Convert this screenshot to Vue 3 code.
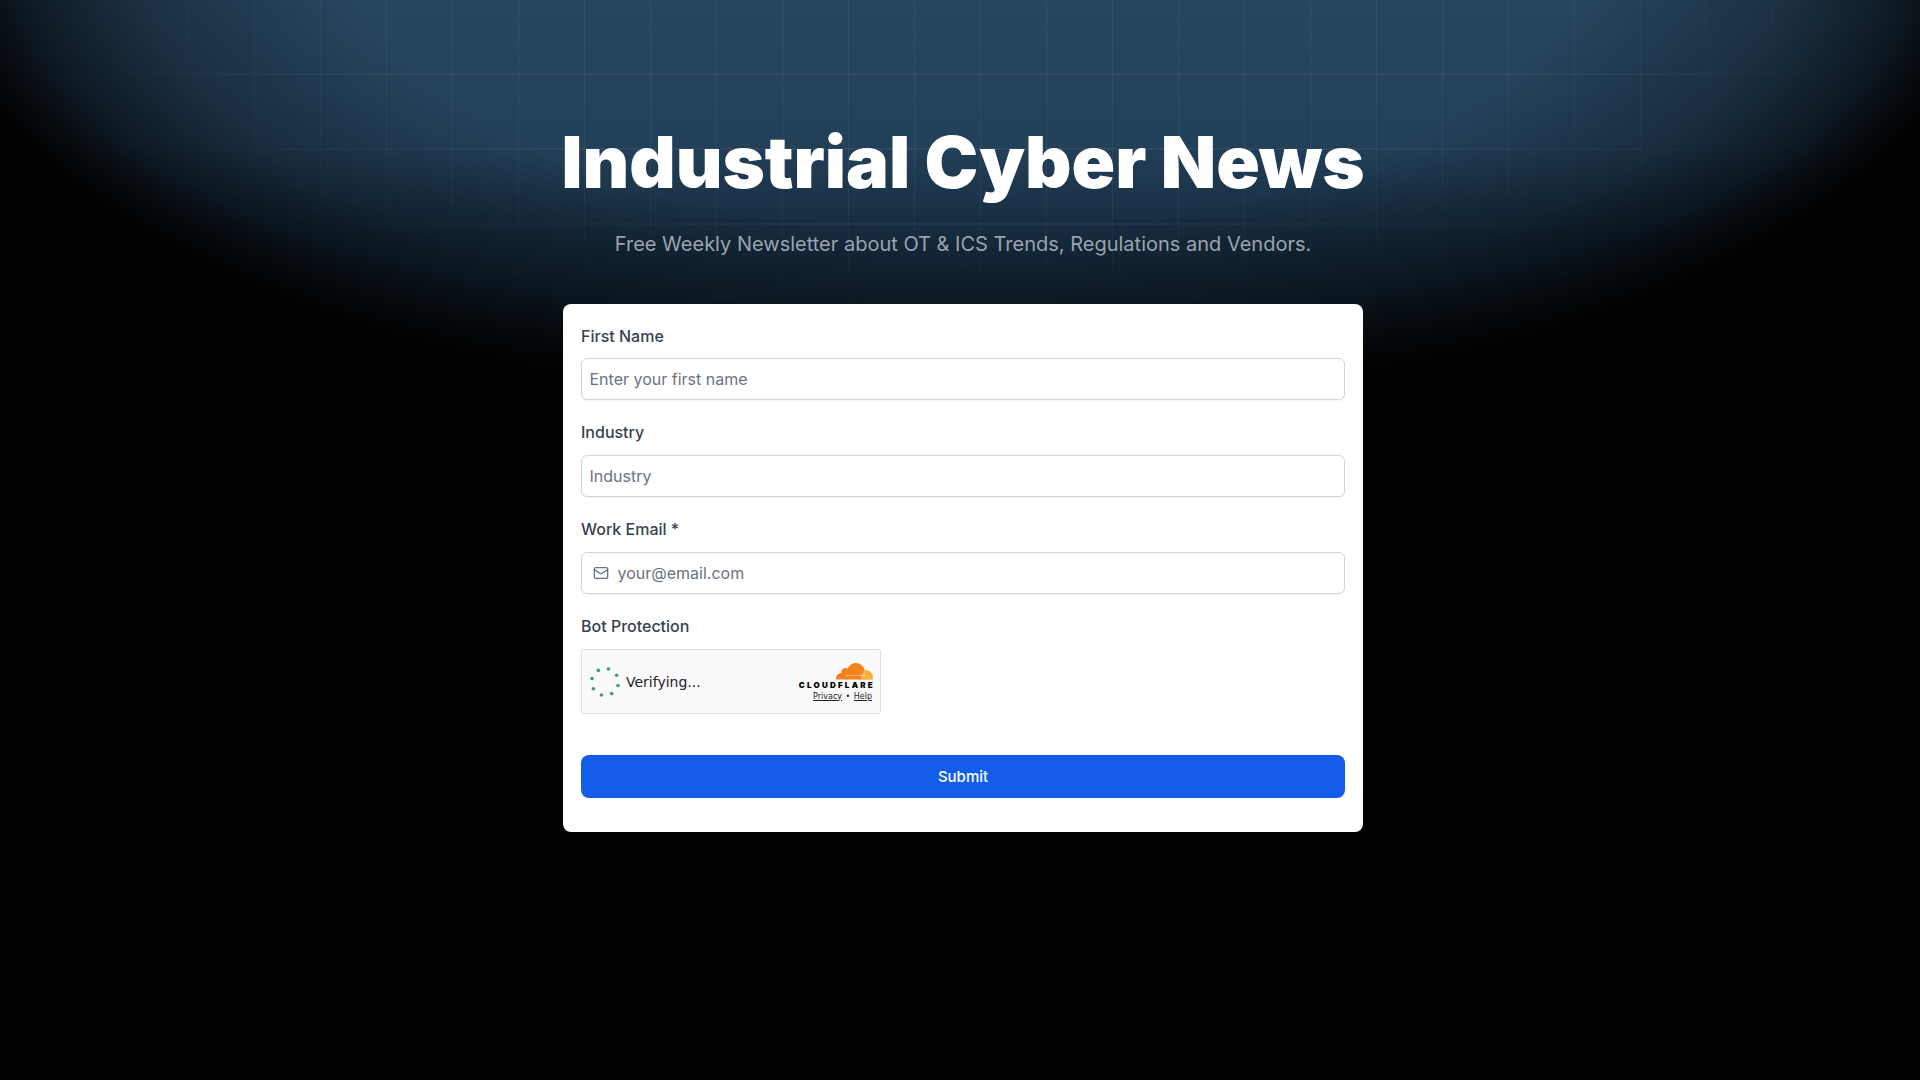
<script setup>
const dots = [0, 1, 2, 3, 4, 5, 6, 7].map((i) => {
  const a = (i * 45 + 15) * Math.PI / 180
  return { x: 15 + 13.4 * Math.cos(a), y: 15 + 13.4 * Math.sin(a) }
})
</script>

<template>
  <div class="page">
    <div class="glow"></div>
    <div class="grid"></div>
    <main class="content">
      <h1 class="title">Industrial Cyber News</h1>
      <p class="subtitle">Free Weekly Newsletter about OT &amp; ICS Trends, Regulations and Vendors.</p>
      <form class="card" @submit.prevent>
        <div class="field">
          <label>First Name</label>
          <input type="text" placeholder="Enter your first name" />
        </div>
        <div class="field">
          <label>Industry</label>
          <input type="text" placeholder="Industry" />
        </div>
        <div class="field">
          <label>Work Email *</label>
          <div class="input-wrap">
            <svg class="mail" viewBox="0 0 24 24" fill="none" stroke="currentColor" stroke-width="2" stroke-linecap="round" stroke-linejoin="round">
              <rect x="2" y="4" width="20" height="16" rx="2" />
              <path d="m22 7-8.97 5.7a1.94 1.94 0 0 1-2.06 0L2 7" />
            </svg>
            <input class="with-icon" type="email" placeholder="your@email.com" />
          </div>
        </div>
        <div class="field bot">
          <label>Bot Protection</label>
          <div class="turnstile">
            <svg class="spinner" viewBox="0 0 30 30">
              <circle v-for="(d, i) in dots" :key="i" :cx="d.x" :cy="d.y" r="1.8" fill="#3d9a7c" />
            </svg>
            <span class="verifying">Verifying...</span>
            <div class="cf">
              <svg class="cloud" viewBox="0 6 24 12">
                <path fill="#fbbf6a" d="M6 15.4 18.6 11l4 1.5 1.2 4.9H15.8z" />
                <path fill="#f6821f" d="M16.5088 16.8447c.1475-.5068.0908-.9707-.1553-1.3154-.2246-.3164-.6045-.499-1.0615-.5205l-8.6592-.1123a.1559.1559 0 0 1-.1333-.0713c-.0283-.042-.0351-.0986-.021-.1553.0278-.084.1123-.1484.2036-.1562l8.7359-.1123c1.0351-.0489 2.1601-.8868 2.5537-1.9136l.499-1.3013c.0215-.0561.0293-.1128.0147-.168-.5625-2.5463-2.835-4.4453-5.5499-4.4453-2.5039 0-4.6284 1.6177-5.3876 3.8614-.4927-.3658-1.1187-.5625-1.794-.499-1.2026.119-2.1665 1.083-2.2861 2.2856-.0283.31-.0069.6128.0635.894C1.5683 13.171 0 14.7754 0 16.752c0 .1748.0142.3515.0352.5273.0141.083.0844.1475.1689.1475h15.9814c.0909 0 .1758-.0645.2032-.1553l.12-.4268z" />
                <path fill="#fbad41" d="M19.2656 11.2813c-.0771 0-.1611 0-.2383.0112-.0566 0-.1054.0415-.127.0976l-.3378 1.1744c-.1475.5068-.0918.9707.1543 1.3164.2256.3164.6055.498 1.0625.5195l1.8437.1133c.0557 0 .1055.0263.1329.0703.0283.043.0351.1074.0214.1562-.0283.084-.1132.1485-.204.1553l-1.921.1123c-1.041.0488-2.1582.8867-2.5527 1.914l-.1406.3585c-.0283.0713.0215.1416.0986.1416h6.5977c.0771 0 .1474-.0489.169-.126.1122-.4082.1757-.837.1757-1.2803 0-2.6025-2.125-4.727-4.7344-4.727" />
              </svg>
              <div class="cf-name">CLOUDFLARE</div>
              <div class="cf-links"><a>Privacy</a><span>•</span><a>Help</a></div>
            </div>
          </div>
        </div>
        <button type="submit" class="submit">Submit</button>
      </form>
    </main>
  </div>
</template>

<style>
body {
  background: #000;
}
</style>

<style scoped>
.page {
  position: relative;
  min-height: 100vh;
  box-sizing: border-box;
  padding-left: 6px;
  overflow: hidden;
  background: #000;
  font-family: Inter, "Liberation Sans", sans-serif;
}

.glow {
  position: absolute;
  inset: 0;
  background: linear-gradient(180deg, #27465f 0, #234059 145px, #152a3c 240px, #10202d 304px, #060c11 380px, #000 430px);
  -webkit-mask-image: radial-gradient(ellipse 1035px 480px at 963px -60px, #000 60%, rgba(0, 0, 0, 0.7) 80%, rgba(0, 0, 0, 0.42) 90%, transparent 100%);
  mask-image: radial-gradient(ellipse 1035px 480px at 963px -60px, #000 60%, rgba(0, 0, 0, 0.7) 80%, rgba(0, 0, 0, 0.42) 90%, transparent 100%);
}

.grid {
  position: absolute;
  inset: 0;
  background-image:
    linear-gradient(to right, rgba(255, 255, 255, 0.055) 1px, transparent 1px),
    linear-gradient(to bottom, rgba(255, 255, 255, 0.05) 2px, transparent 2px);
  background-size: 66px 75px;
  background-position: 56px 73px;
  -webkit-mask-image: radial-gradient(ellipse 950px 330px at 963px 0, #000 55%, transparent 100%);
  mask-image: radial-gradient(ellipse 950px 330px at 963px 0, #000 55%, transparent 100%);
}

.content {
  position: relative;
  width: 800px;
  margin: 0 auto;
  padding-top: 118px;
  display: flex;
  flex-direction: column;
  align-items: center;
}

.title {
  margin: 0;
  color: #fff;
  font-size: 72px;
  line-height: 88px;
  font-weight: 900;
  white-space: nowrap;
}

.subtitle {
  margin: 24px 0 0;
  color: #9ca3af;
  font-size: 20px;
  line-height: 28px;
}

.card {
  width: 100%;
  box-sizing: border-box;
  margin-top: 46px;
  padding: 19.5px 18px 34.5px;
  background: #fff;
  border-radius: 8px;
  display: flex;
  flex-direction: column;
}

.field {
  display: flex;
  flex-direction: column;
  margin-bottom: 20px;
}

.field label {
  color: #374151;
  font-size: 16px;
  font-weight: 500;
  line-height: 24px;
  margin-bottom: 10.75px;
}

input {
  width: 100%;
  height: 42px;
  box-sizing: border-box;
  padding: 0 7.5px;
  border: 1px solid #d1d5db;
  border-radius: 6px;
  background: #fff;
  color: #111827;
  font-family: inherit;
  font-size: 16px;
  box-shadow: 0 1px 2px rgba(0, 0, 0, 0.05);
  outline: none;
}

input::placeholder {
  color: #6b7280;
}

.input-wrap {
  position: relative;
}

.with-icon {
  padding-left: 35.5px;
}

.mail {
  position: absolute;
  left: 12px;
  top: 13px;
  width: 16px;
  height: 16px;
  color: #6b7280;
}

.bot {
  margin-bottom: 40.5px;
}

.bot label {
  margin-bottom: 11.25px;
}

.turnstile {
  width: 300px;
  height: 65px;
  box-sizing: border-box;
  border: 1px solid #e0e0e0;
  border-radius: 2px;
  background: #fafafa;
  display: flex;
  align-items: center;
  padding: 0 7px 0 8px;
  font-family: "DejaVu Sans", sans-serif;
}

.spinner {
  width: 30px;
  height: 30px;
  flex: none;
}

.verifying {
  margin-left: 6px;
  color: #232323;
  font-size: 14px;
}

.cf {
  margin-left: auto;
  display: flex;
  flex-direction: column;
  align-items: flex-end;
}

.cloud {
  width: 37px;
  height: 18.5px;
  display: block;
}

.cf-name {
  margin-top: 1px;
  color: #000;
  font-family: Inter, sans-serif;
  font-size: 8px;
  line-height: 9px;
  font-weight: 900;
  letter-spacing: 2.25px;
  margin-right: -2px;
}

.cf-links {
  margin-top: 1.5px;
  margin-right: 1px;
  display: flex;
  gap: 3.5px;
  color: #232323;
  font-size: 8px;
  line-height: 10px;
}

.cf-links a {
  text-decoration: underline;
}

.submit {
  height: 43px;
  border: none;
  border-radius: 8px;
  background: #145dea;
  color: #fff;
  font-family: inherit;
  font-size: 15px;
  font-weight: 500;
}
</style>
